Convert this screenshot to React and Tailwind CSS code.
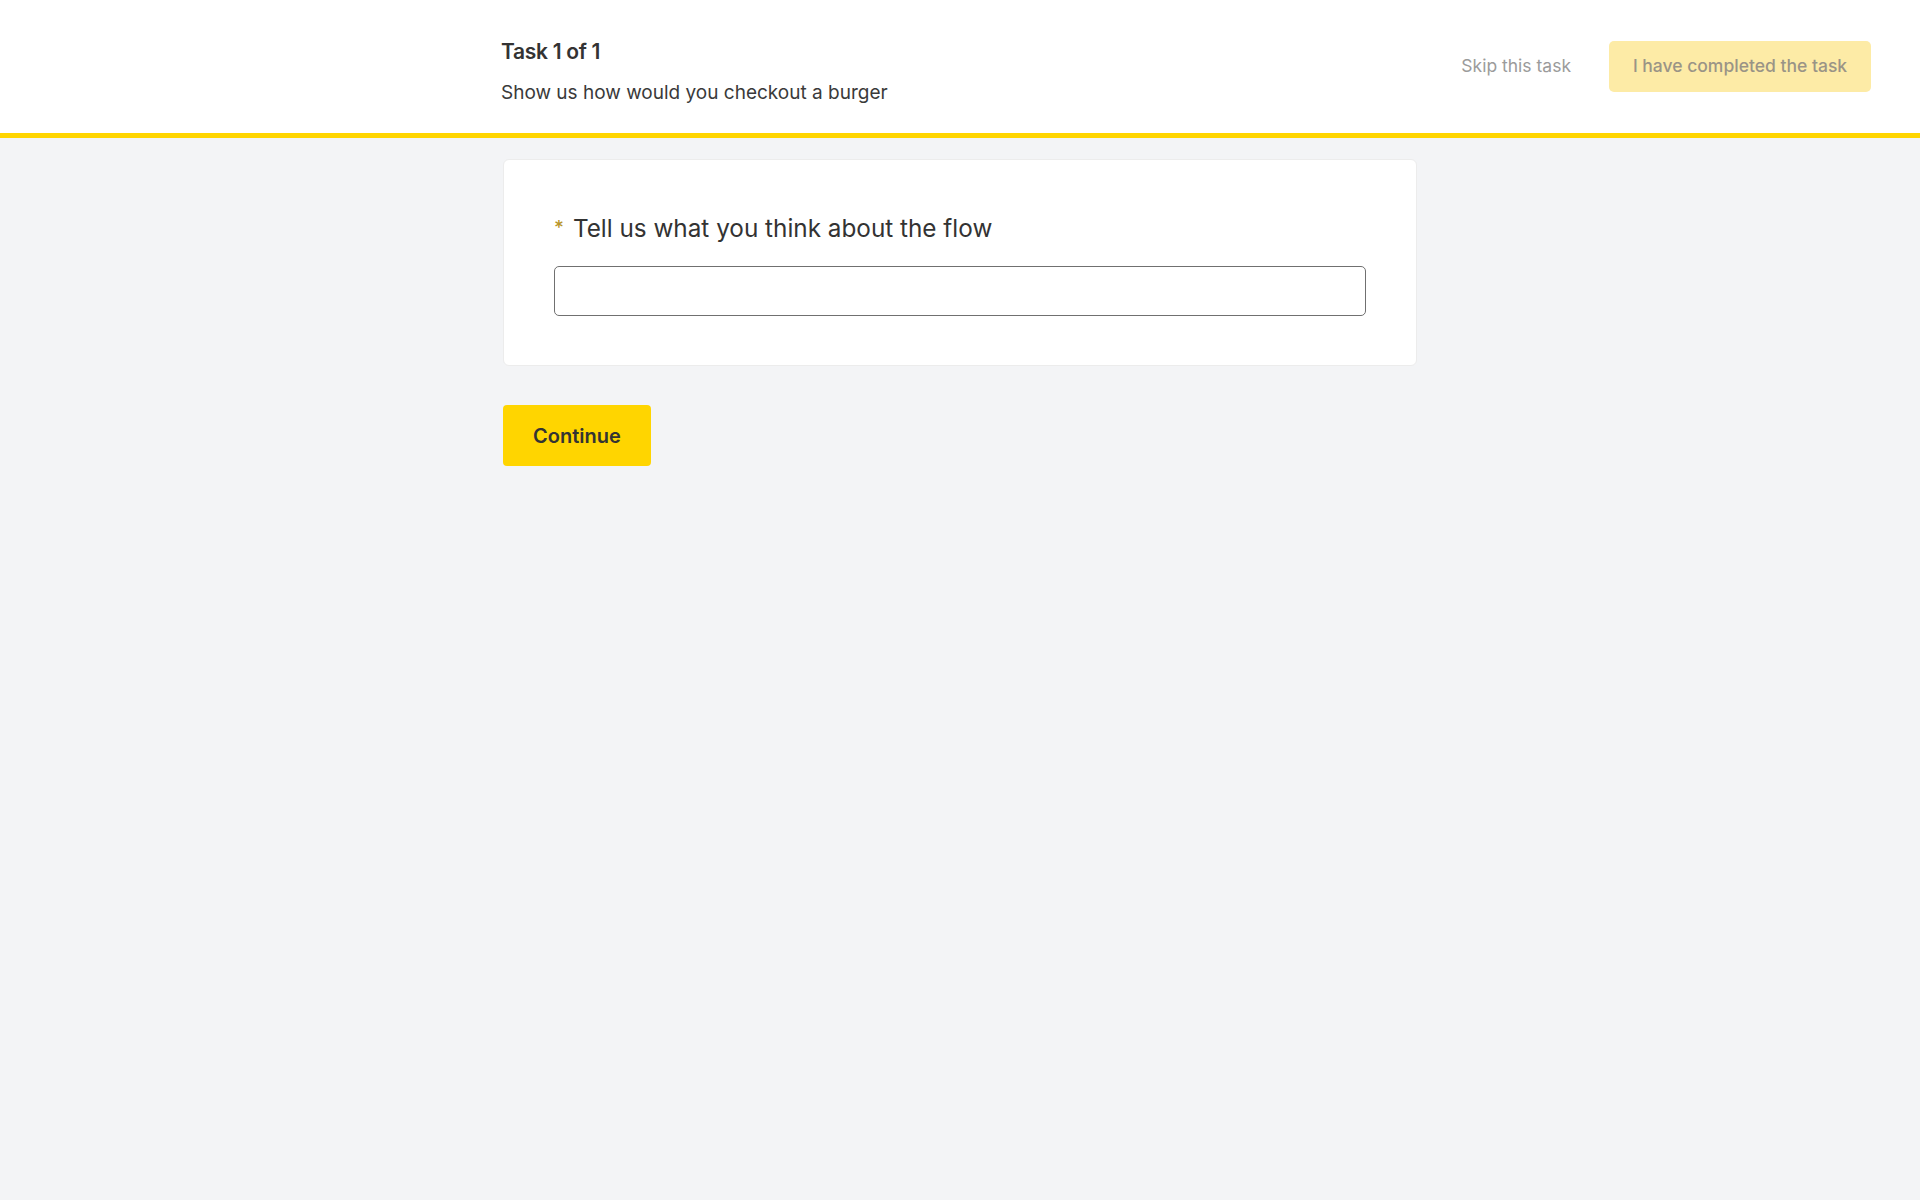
export default function App() {
  return (
    <div className="min-h-screen bg-[#f3f4f6] font-['Inter',sans-serif] text-[#333]">
      <header className="relative h-[138px] bg-white border-b-[5px] border-[#ffd500]">
        <div className="mx-auto w-[918px] pt-[37px]">
          <h1 className="text-[21px] font-semibold leading-[30px] tracking-[-0.3px] text-[#333]">Task 1 of 1</h1>
          <p className="mt-[12px] text-[19px] leading-[28px] text-[#3a3a3a]">
            Show us how would you checkout a burger
          </p>
        </div>
        <div className="absolute right-[49px] top-[41px] flex items-center gap-[38px]">
          <button className="text-[17.5px] text-[#9b9b9b]">Skip this task</button>
          <button className="h-[51px] w-[262px] rounded-[5px] bg-[#fdeba6] text-[17.5px] font-medium text-[#9a9486]">
            I have completed the task
          </button>
        </div>
      </header>

      <main className="mx-auto w-[914px] pt-[21px]">
        <div className="rounded-[6px] border border-[#ececec] bg-white px-[50px] pt-[52px] pb-[49px]">
          <label className="flex items-center text-[24.3px] leading-[32px] text-[#333]">
            <span className="mr-[9px] text-[19px] font-medium text-[#b8952a]">*</span>
            Tell us what you think about the flow
          </label>
          <input
            type="text"
            className="mt-[22px] block h-[50px] w-full rounded-[5px] border border-[#707070] bg-white px-3 outline-none"
          />
        </div>

        <button className="mt-[39px] h-[61px] w-[148px] rounded-[4px] bg-[#ffd500] text-[20px] font-semibold text-[#333]">
          Continue
        </button>
      </main>
    </div>
  );
}
